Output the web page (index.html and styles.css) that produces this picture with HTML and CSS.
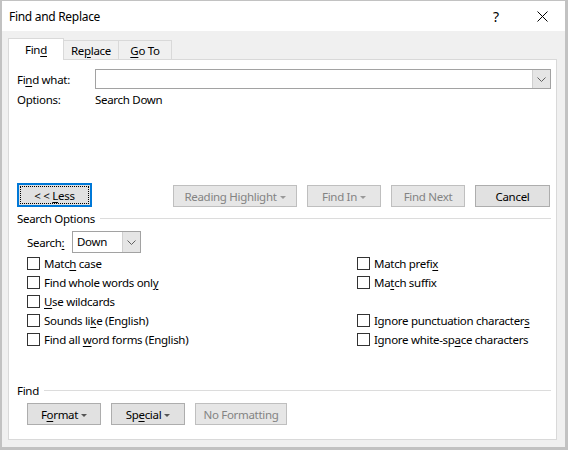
FILE: index.html
```html
<!DOCTYPE html>
<html>
<head>
    <title>Find and Replace</title>
    <link rel="stylesheet" href="styles.css">
</head>
<body>
    <div class="window">
        <div class="titlebar">
            <span class="title">Find and Replace</span>
            <span class="cap_btn help">?</span>
            <span class="cap_btn close">
                <svg width="11" height="11" viewBox="0 0 11 11"><path d="M0.5 0.5 L10.5 10.5 M10.5 0.5 L0.5 10.5" stroke="#000" stroke-width="1" fill="none"/></svg>
            </span>
        </div>
        <div class="client">
            <div class="tabs">
                <div class="tab active">Fin<u>d</u></div>
                <div class="tab">Re<u>p</u>lace</div>
                <div class="tab goto"><u>G</u>o To</div>
            </div>
            <div class="panel">
                <!-- find what -->
                <div class="what_row">
                    <span class="what_label">Fi<u>n</u>d what:</span>
                    <div class="combo">
                        <span class="combo_field"></span>
                        <span class="combo_btn">
                            <svg width="9" height="5" viewBox="0 0 9 5"><path d="M0.5 0.5 L4.5 4.5 L8.5 0.5" stroke="#606060" fill="none"/></svg>
                        </span>
                    </div>
                </div>
                <div class="options_row">
                    <span class="what_label">Options:</span>
                    <span>Search Down</span>
                </div>

                <!-- main buttons -->
                <div class="btn_row">
                    <button class="btn less">&lt; &lt; <u>L</u>ess</button>
                    <div class="btn_group">
                        <button class="btn disabled w_rh">Reading Highlight<span class="caret"></span></button>
                        <button class="btn disabled w_74">Find In<span class="caret"></span></button>
                        <button class="btn disabled w_74">Find Next</button>
                        <button class="btn w_75">Cancel</button>
                    </div>
                </div>

                <!-- search options -->
                <div class="section_title"><span>Search Options</span><span class="rule"></span></div>
                <div class="search_row">
                    <span class="search_label">Search<u>:</u></span>
                    <div class="select">
                        <span class="select_value">Down</span>
                        <span class="combo_btn">
                            <svg width="9" height="5" viewBox="0 0 9 5"><path d="M0.5 0.5 L4.5 4.5 L8.5 0.5" stroke="#606060" fill="none"/></svg>
                        </span>
                    </div>
                </div>
                <div class="checks">
                    <div class="check"><span class="box"></span><span>Matc<u>h</u> case</span></div>
                    <div class="check"><span class="box"></span><span>Match prefi<u>x</u></span></div>
                    <div class="check"><span class="box"></span><span>Find whole words onl<u>y</u></span></div>
                    <div class="check"><span class="box"></span><span>Ma<u>t</u>ch suffix</span></div>
                    <div class="check"><span class="box"></span><span><u>U</u>se wildcards</span></div>
                    <div class="check"></div>
                    <div class="check"><span class="box"></span><span>Sounds li<u>k</u>e (English)</span></div>
                    <div class="check"><span class="box"></span><span>Ignore punctuation character<u>s</u></span></div>
                    <div class="check"><span class="box"></span><span>Find all <u>w</u>ord forms (English)</span></div>
                    <div class="check"><span class="box"></span><span>Ignore white-sp<u>a</u>ce characters</span></div>
                </div>

                <!-- find formatting -->
                <div class="section_title find_title"><span>Find</span><span class="rule"></span></div>
                <div class="fmt_row">
                    <button class="btn w_74">F<u>o</u>rmat<span class="caret"></span></button>
                    <button class="btn w_74">Sp<u>e</u>cial<span class="caret"></span></button>
                    <button class="btn disabled w_nf">No Formatting</button>
                </div>
            </div>
        </div>
    </div>
</body>
</html>
```

FILE: styles.css
```css
body {
    margin: 0;
    background-color: #f0f0f0;
    font-family: "Noto Sans", "Open Sans", sans-serif;
    font-size: 11.5px;
    letter-spacing: -0.3px;
    color: #000;
}

u {
    text-decoration-thickness: 1px;
    text-underline-offset: 2px;
}

.window {
    width: 568px;
    height: 450px;
    box-sizing: border-box;
    border-style: solid;
    border-color: #c2c2c2;
    border-width: 1px 3px 3px 2px;
    display: flex;
    flex-direction: column;
    background-color: #f0f0f0;
}

.titlebar {
    height: 30px;
    background-color: #fff;
    display: flex;
    align-items: center;
    padding-left: 7px;
}

.title {
    flex: 1;
    font-size: 12px;
}

.cap_btn {
    width: 46px;
    height: 30px;
    display: flex;
    align-items: center;
    justify-content: center;
}

.help {
    font-size: 14px;
}

.client {
    flex: 1;
    display: flex;
    flex-direction: column;
    padding: 7px 8px 7px 6px;
}

.tabs {
    display: flex;
    align-items: flex-end;
    height: 22px;
    margin-bottom: -1px;
}

.tab {
    box-sizing: border-box;
    width: 56px;
    height: 20px;
    margin-left: -1px;
    border: 1px solid #d9d9d9;
    border-bottom: none;
    background-color: #f0f0f0;
    text-align: center;
    line-height: 19px;
}

.tab.active {
    height: 22px;
    margin-left: 0;
    background-color: #fff;
    position: relative;
    z-index: 1;
    line-height: 22px;
}

.tab.goto {
    width: 54px;
}

.panel {
    flex: 1;
    background-color: #fff;
    border: 1px solid #d9d9d9;
    padding: 9px 5px 0 8px;
}

.what_row {
    display: flex;
    height: 20px;
    align-items: center;
}

.what_label {
    width: 78px;
}

.combo {
    flex: 1;
    height: 20px;
    box-sizing: border-box;
    border: 1px solid #a2a2a2;
    display: flex;
}

.combo_field {
    flex: 1;
}

.combo_btn {
    width: 17px;
    background-color: #e5e5e5;
    border-left: 1px solid #cfcfcf;
    display: flex;
    align-items: center;
    justify-content: center;
}

.options_row {
    display: flex;
    height: 20px;
    align-items: center;
}

.btn_row {
    display: flex;
    align-items: flex-start;
    margin-top: 74px;
    padding-right: 1px;
    height: 24px;
}

.btn_group {
    margin-left: auto;
    display: flex;
    gap: 10px;
    padding-top: 2px;
}

.btn {
    box-sizing: border-box;
    height: 22px;
    padding: 0;
    border: 1px solid #adadad;
    background-color: #e1e1e1;
    font-family: inherit;
    font-size: 11.5px;
    letter-spacing: -0.3px;
    color: #000;
}

.btn.disabled {
    border-color: #bfbfbf;
    background-color: #e6e6e6;
    color: #838383;
}

.btn.less {
    width: 75px;
    height: 24px;
    border: 2px solid #0078d7;
    outline: 1px dotted #000;
    outline-offset: -4px;
}

.w_rh {
    width: 124px;
}

.w_74 {
    width: 74px;
}

.w_75 {
    width: 75px;
}

.w_nf {
    width: 92px;
}

.caret {
    display: inline-block;
    width: 0;
    height: 0;
    margin-left: 3px;
    vertical-align: middle;
    border-left: 3px solid transparent;
    border-right: 3px solid transparent;
    border-top: 3px solid #555;
}

.disabled .caret {
    border-top-color: #999;
}

.section_title {
    display: flex;
    align-items: center;
    gap: 5px;
    height: 20px;
    margin-top: 1px;
}

.rule {
    flex: 1;
    height: 1px;
    background-color: #dcdcdc;
}

.search_row {
    display: flex;
    align-items: center;
    height: 22px;
    margin-top: 3px;
    padding-left: 10px;
}

.search_label {
    width: 45px;
}

.select {
    box-sizing: border-box;
    width: 69px;
    height: 22px;
    border: 1px solid #a2a2a2;
    display: flex;
}

.select_value {
    flex: 1;
    padding-left: 4px;
    line-height: 20px;
}

.checks {
    display: grid;
    grid-template-columns: 330px 1fr;
    grid-auto-rows: 19px;
    margin-top: 1px;
    padding-left: 10px;
}

.check {
    display: flex;
    align-items: center;
}

.box {
    width: 11px;
    height: 11px;
    border: 1px solid #333;
    margin-right: 4px;
}

.find_title {
    margin-top: 31px;
}

.fmt_row {
    display: flex;
    gap: 10px;
    margin-top: 3px;
    padding-left: 10px;
}
```
